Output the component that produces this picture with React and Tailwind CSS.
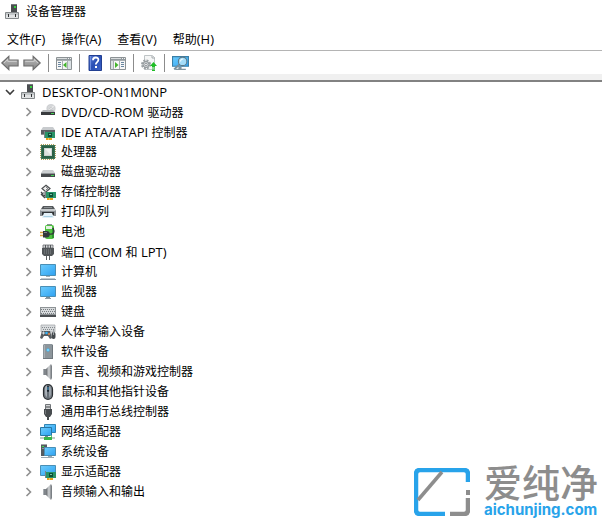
import React, { useState } from 'react';

const Icon = ({ children, className = 'size-4' }) => (
  <svg viewBox="0 0 16 16" className={`${className} shrink-0`} aria-hidden="true">
    {children}
  </svg>
);

// Gradients shared by all icons
const Gradients = () => (
  <svg className="absolute size-0" aria-hidden="true">
    <defs>
      <linearGradient id="screen" x1="0" y1="0" x2="1" y2="1">
        <stop offset="0" stopColor="#6fcbfb" />
        <stop offset="0.5" stopColor="#4db8f8" />
        <stop offset="1" stopColor="#2f9ff0" />
      </linearGradient>
      <linearGradient id="cone" x1="0" y1="0" x2="1" y2="0">
        <stop offset="0" stopColor="#63676b" />
        <stop offset="0.6" stopColor="#d5d8da" />
        <stop offset="1" stopColor="#868a8e" />
      </linearGradient>
      <linearGradient id="help" x1="0" y1="0" x2="1" y2="1">
        <stop offset="0" stopColor="#5b7fd8" />
        <stop offset="0.5" stopColor="#2a4fb4" />
        <stop offset="1" stopColor="#3c62c8" />
      </linearGradient>
      <linearGradient id="arrow" x1="0" y1="0" x2="0" y2="1">
        <stop offset="0" stopColor="#bcbcbc" />
        <stop offset="1" stopColor="#858585" />
      </linearGradient>
    </defs>
  </svg>
);

const Card = ({ x = 5, y = 8 }) => (
  <g transform={`translate(${x} ${y})`}>
    <path d="M0.5 -1v7" stroke="#7d8588" />
    <rect x="1" width="10" height="6" fill="#2a9468" />
    <rect x="4" y="1" width="4" height="4" fill="#0c5038" />
    <path d="M5 2.5h2" stroke="#79c8a5" />
    <path d="M2 6h6v2H2z" fill="#e8a11b" />
    <path d="M4.5 6v2" stroke="#fff0b0" strokeWidth="0.5" />
  </g>
);

const PcIcon = () => (
  <Icon>
    <path d="M7 0h6v9H7z" fill="#4a4d50" />
    <path d="M7 0h6v1H7z" fill="#777b7e" />
    <path d="M10 2h2v2h-2z" fill="#37d23f" />
    <path d="M1.5 8.5h13v6h-13z" fill="#e1e3e4" stroke="#85898b" />
    <path d="M2 9h12v2H2z" fill="#c4c8ca" />
    <path d="M4 10h1v3H4zM11 10h1v3h-1z" fill="#2f3133" />
  </Icon>
);

const DiscDriveIcon = () => (
  <Icon>
    <ellipse cx="11" cy="4.5" rx="4.2" ry="4" fill="#d5d7d9" stroke="#b8bbbe" strokeWidth="0.5" />
    <path d="M11 4.5l3-3M11 4.5L8 7.5" stroke="#f5f5f5" />
    <circle cx="11" cy="4.5" r="1" fill="#fff" stroke="#a4a7aa" strokeWidth="0.5" />
    <path d="M3 6h10l2 2H1z" fill="#aeb2b5" />
    <path d="M1 8h14v3H1z" fill="#383b3e" />
    <path d="M11 9h3v1h-3z" fill="#45cf55" />
  </Icon>
);

const IdeIcon = () => (
  <Icon>
    <path d="M3 3h10l2 3H1z" fill="#c8cbce" />
    <path d="M1 6h14v4H1z" fill="#5a5e61" />
    <path d="M1 10h5v1H1z" fill="#929699" />
    <Card x={4} />
  </Icon>
);

const CpuIcon = () => (
  <Icon>
    <path d="M1 .5h14M1 15.5h14M.5 1v14M15.5 1v14" stroke="#b5a05c" strokeDasharray="1 1" />
    <path d="M1 1h14v14H1z" fill="#3c7457" />
    <path d="M2 2h12v12H2z" fill="#2b6147" />
    <path d="M4 4h8v8H4z" fill="#cfd6d3" />
    <path d="M5 5h6v6H5z" fill="#f0f2f1" />
    <path d="M4 12V4l8 8z" fill="#c1c9c5" opacity="0.4" />
  </Icon>
);

const DiskIcon = () => (
  <Icon>
    <path d="M3 6h10l2 3H1z" fill="#cccfd1" />
    <path d="M1 9h14v4H1z" fill="#46494c" />
    <path d="M1 9h14v1H1z" fill="#929699" />
    <path d="M11 11h3v1h-3z" fill="#43d354" />
  </Icon>
);

const StorageIcon = () => (
  <Icon>
    <path d="M6 1.2L10 4.5 6 8 2 4.5z" fill="#f3f3f3" stroke="#4c4f51" strokeWidth="1.2" />
    <path d="M6 3l2 1.5L6 6" fill="none" stroke="#6c7073" />
    <path d="M1 8l4 4M1 10l4 4" stroke="#414548" strokeWidth="1.3" />
    <path d="M3 8h3v3H3z" fill="#a3a7a9" />
    <Card />
  </Icon>
);

const PrinterIcon = () => (
  <Icon>
    <path d="M3 2h10l2 3H1z" fill="#55595c" />
    <path d="M4 3h8v1H4z" fill="#8c9194" />
    <path d="M1 5h14l1 2v5H0V7z" fill="#8b9094" />
    <path d="M1 5h14v2H1z" fill="#c6cacc" />
    <path d="M2 8h12v3H2z" fill="#313437" />
    <path d="M4 9h8l2 5H2z" fill="#e4f1f8" />
    <path d="M3.5 12.5h9" stroke="#a9cfe2" />
  </Icon>
);

const BatteryIcon = () => (
  <Icon>
    <path d="M7 0h5v2H7z" fill="#8b9094" />
    <rect x="5" y="1" width="9" height="14" rx="2" fill="#4fc23f" />
    <path d="M6 2h6v3H6z" fill="#e4f0e2" />
    <path d="M12 4h2v10h-2z" fill="#2d9430" />
    <path d="M0 8.5h4M0 11.5h4" stroke="#d7a33d" strokeWidth="1.4" />
    <path d="M3 7h3.5a3 3 0 0 1 0 6.5H3z" fill="#33373a" />
    <path d="M9 10c5 1 6-2 4-6" fill="none" stroke="#33373a" strokeWidth="1.3" />
    <path d="M4 8.5h3" stroke="#7f8487" />
  </Icon>
);

const PortIcon = () => (
  <Icon>
    <path d="M3 1h10v3H3z" fill="#d4d6d8" stroke="#676b6e" strokeWidth="0.8" />
    <path d="M5.5 1v3M8 1v3M10.5 1v3" stroke="#55595c" />
    <path d="M2 4h12v6l-2 2H4l-2-2z" fill="#515558" />
    <path d="M4.5 5v5M6.5 5v5M8.5 5v5M10.5 5v5" stroke="#767b7e" strokeWidth="0.7" />
    <path d="M6 12h1v4H6zM9 12h1v4H9z" fill="#5c6063" />
  </Icon>
);

const ComputerIcon = () => (
  <Icon>
    <path d="M.5 .5h15v11H.5z" fill="url(#screen)" stroke="#4a8fb5" />
    <path d="M6 12h4v1H6z" fill="#a3b0b8" />
    <path d="M1 14h14v1H1z" fill="#c0c9cf" />
    <path d="M0 15h16v1H0z" fill="#8794a0" />
  </Icon>
);

const MonitorIcon = () => (
  <Icon>
    <path d="M.5 2.5h15v10H.5z" fill="url(#screen)" stroke="#4a8fb5" />
    <path d="M6 13h4v1H6z" fill="#7e8f98" />
    <path d="M5 14h6v1H5z" fill="#8c9aa2" />
  </Icon>
);

const KeyboardIcon = () => (
  <Icon>
    <path d="M0 3h16v9H0z" fill="#8e9396" />
    <path d="M1 4h14v6H1z" fill="#d7dadc" />
    <path d="M1 5.5h14M2 7.5h13M1 9.5h14" stroke="#777c80" strokeDasharray="1 1" />
    <path d="M0 11h16v2H0z" fill="#4b4f52" />
  </Icon>
);

const HidIcon = () => (
  <Icon>
    <path d="M1 1h14v7H1z" fill="#d8dbdd" stroke="#9da2a5" strokeWidth="0.7" />
    <path d="M2 3.5h13M3 5.5h12" stroke="#868b8f" strokeDasharray="1 1" />
    <path d="M2 7h8l2 7-2 1-2-3H4l-2 3-2-1z" fill="#575c60" />
    <path d="M2 9h3M3.5 7.5v3" stroke="#d5d8da" />
    <circle cx="6.5" cy="9" r="1.3" fill="#38b3f6" />
    <circle cx="9" cy="10" r="1" fill="#e58b4a" />
    <rect x="11.5" y="8" width="4" height="7" rx="2" fill="#44494d" />
    <path d="M13.5 6v5" stroke="#9aa1a6" />
  </Icon>
);

const SoftwareIcon = () => (
  <Icon>
    <path d="M4 0h8l1 1v14H3V1z" fill="#8c959b" />
    <path d="M4 1h1v13H4z" fill="#a9b0b5" />
    <path d="M12 1h1v14h-1zM3 14h10v1H3z" fill="#6f777d" />
    <path d="M8 4l2 2-2 2-2-2z" fill="#36b9fa" />
    <path d="M8 5l1 1-1 1-1-1z" fill="#b0e9ff" />
  </Icon>
);

const SpeakerIcon = () => (
  <Icon>
    <path d="M3 5h3v6H3z" fill="#80858a" />
    <path d="M6 5l5-5v16l-5-5z" fill="url(#cone)" />
    <path d="M11 0l1 2v12l-1 2z" fill="#7b8085" />
    <path d="M3 5h1v6H3z" fill="#a8adb1" />
  </Icon>
);

const MouseIcon = () => (
  <Icon>
    <rect x="3.5" y="0.7" width="9" height="14.6" rx="4.5" fill="#777e85" stroke="#292d31" strokeWidth="1.2" />
    <path d="M5 4.5C5 2 6.5 1.5 7 1.5V13c-2-1-2-4-2-8z" fill="#abb2b9" />
    <path d="M9 2c2 1 2 2 2 5s0 5-2 6z" fill="#98a0a8" />
    <rect x="7" y="2" width="2" height="6" rx="1" fill="#17202a" />
    <path d="M8 3v3" stroke="#5bb6e8" />
    <path d="M8 8v6" stroke="#596068" />
  </Icon>
);

const UsbIcon = () => (
  <Icon>
    <path d="M5.5 .5h5v5h-5z" fill="#d2d4d6" stroke="#717578" />
    <path d="M6.5 2h1v2h-1zM8.5 2h1v2h-1z" fill="#44484b" />
    <path d="M4 5h8v5l-2 3H6l-2-3z" fill="#484c4f" />
    <path d="M5 6h1v4H5z" fill="#777b7e" />
    <path d="M8 12v4" stroke="#484c4f" strokeWidth="2" />
  </Icon>
);

const NetworkIcon = () => (
  <Icon>
    <path d="M4.5 .5h11v8h-11z" fill="url(#screen)" stroke="#3185b4" />
    <path d="M.5 3.5h11v8H.5z" fill="url(#screen)" stroke="#2877a5" />
    <path d="M5 12h3v2H5z" fill="#748892" />
    <path d="M0 14h15" stroke="#c0cdc6" strokeWidth="2" />
    <path d="M4 13h8v3H4z" fill="#38b64a" />
    <path d="M10 11l2 2" stroke="#63ca70" />
  </Icon>
);

const SystemIcon = () => (
  <Icon>
    <path d="M1 0h6v12H1z" fill="#555b5f" />
    <path d="M1 0h6v1H1z" fill="#a2a7aa" />
    <path d="M2 2h2v1H2z" fill="#3fe34c" />
    <path d="M2 4.5h4" stroke="#8d9498" />
    <path d="M4.5 3.5h11v8h-11z" fill="url(#screen)" stroke="#4a8fb5" />
    <path d="M8 12h4v1H8zM1 13h13v1H1z" fill="#9aa8b0" />
  </Icon>
);

const DisplayIcon = () => (
  <Icon>
    <path d="M.5 1.5h15v10H.5z" fill="url(#screen)" stroke="#4a8fb5" />
    <Card />
  </Icon>
);

const BackIcon = () => (
  <Icon className="size-[18px]">
    <path d="M.7 8l6.3-6v3.3h8.2v5.4H7V14z" fill="url(#arrow)" stroke="#6c6c6c" strokeWidth="1" />
    <path d="M2.7 8L6 4.8v1.7h8" fill="none" stroke="#d5d5d5" strokeWidth="0.8" />
  </Icon>
);

const ForwardIcon = () => (
  <Icon className="size-[18px]">
    <path d="M15.3 8L9 2v3.3H.8v5.4H9V14z" fill="url(#arrow)" stroke="#6c6c6c" strokeWidth="1" />
    <path d="M2 6.5h8V4.8L13.2 8" fill="none" stroke="#d5d5d5" strokeWidth="0.8" />
  </Icon>
);

const TreePaneIcon = () => (
  <Icon>
    <path d="M.5 2.5h15v12H.5z" fill="#f7f7f7" stroke="#8c9295" />
    <path d="M1 3h14v2H1z" fill="#929a9e" />
    <path d="M1 3.5h10" stroke="#d9dcdd" />
    <path d="M12 3.5h1M14 3.5h1" stroke="#f4f4f4" />
    <path d="M1 5.5h14M6.5 6v8M11.5 6v8" stroke="#a9afb2" />
    <path d="M2 7.5h3M2 9.5h3M2 11.5h3" stroke="#6986a0" />
    <path d="M12 6h3v8h-3z" fill="#dbe1e4" />
    <path d="M10.5 7v6L7 10z" fill="#42b42b" />
  </Icon>
);

const ActionPaneIcon = () => (
  <Icon>
    <path d="M.5 2.5h15v12H.5z" fill="#f7f7f7" stroke="#8c9295" />
    <path d="M1 3h14v2H1z" fill="#929a9e" />
    <path d="M1 3.5h10" stroke="#d9dcdd" />
    <path d="M12 3.5h1M14 3.5h1" stroke="#f4f4f4" />
    <path d="M1 5.5h14M3.5 6v8M9.5 6v8" stroke="#a9afb2" />
    <path d="M1 6h2v8H1z" fill="#dbe1e4" />
    <path d="M11 7.5h3M11 9.5h3M11 11.5h3" stroke="#6986a0" />
    <path d="M5 7v6l3.5-3z" fill="#42b42b" />
  </Icon>
);

const HelpIcon = () => (
  <Icon>
    <path d="M2 .5h12.5v15H2z" fill="url(#help)" stroke="#223f91" />
    <path d="M3.5 1v14" stroke="#6f8edf" />
    <path d="M6 5.2c0-3.6 5.4-3.5 5.4-.4 0 2.2-2.6 2.3-2.6 4.6" fill="none" stroke="#fff" strokeWidth="1.8" />
    <path d="M8 11h2v2H8z" fill="#fff" />
  </Icon>
);

const UpdateIcon = () => (
  <Icon>
    <path d="M3.5.5h8l2 2v12h-10z" fill="#f5f6f6" stroke="#bfc4c6" />
    <path d="M11 1v2h3" fill="none" stroke="#a4aaad" />
    <circle cx="5" cy="9.5" r="4" fill="none" stroke="#9ba1a4" strokeWidth="2" strokeDasharray="2 1.14" />
    <circle cx="5" cy="9.5" r="3" fill="#d2d6d8" stroke="#8c9295" />
    <circle cx="5" cy="9.5" r="1.2" fill="#fff" stroke="#73797d" strokeWidth="0.7" />
    <path d="M12.5 7l3.5 4h-2v1h-3v-1H9z" fill="#1fbe26" />
    <path d="M11 12.5h3v1h-3zM11 14.5h3v1.5h-3z" fill="#1fbe26" />
  </Icon>
);

const ScanIcon = () => (
  <Icon className="size-[17px]">
    <path d="M.5 1.5h15v9H.5z" fill="url(#screen)" stroke="#397fa7" />
    <path d="M6 11h3v2H6zM3 13h10v1H3z" fill="#8195a0" />
    <path d="M7.5 8.5L2 13.5" stroke="#78909e" strokeWidth="1.8" />
    <circle cx="10" cy="6" r="4" fill="#a3dcf8" stroke="#5c7886" />
    <path d="M8 6c0-1.5 1-2.3 2.5-2.3" stroke="#effaff" fill="none" />
  </Icon>
);

const menus = ['文件(F)', '操作(A)', '查看(V)', '帮助(H)'];

const devices = [
  { name: 'DVD/CD-ROM 驱动器', icon: DiscDriveIcon },
  { name: 'IDE ATA/ATAPI 控制器', icon: IdeIcon },
  { name: '处理器', icon: CpuIcon },
  { name: '磁盘驱动器', icon: DiskIcon },
  { name: '存储控制器', icon: StorageIcon },
  { name: '打印队列', icon: PrinterIcon },
  { name: '电池', icon: BatteryIcon },
  { name: '端口 (COM 和 LPT)', icon: PortIcon },
  { name: '计算机', icon: ComputerIcon },
  { name: '监视器', icon: MonitorIcon },
  { name: '键盘', icon: KeyboardIcon },
  { name: '人体学输入设备', icon: HidIcon },
  { name: '软件设备', icon: SoftwareIcon },
  { name: '声音、视频和游戏控制器', icon: SpeakerIcon },
  { name: '鼠标和其他指针设备', icon: MouseIcon },
  { name: '通用串行总线控制器', icon: UsbIcon },
  { name: '网络适配器', icon: NetworkIcon },
  { name: '系统设备', icon: SystemIcon },
  { name: '显示适配器', icon: DisplayIcon },
  { name: '音频输入和输出', icon: SpeakerIcon },
];

// Latin runs are set one size larger than the Chinese around them
const Label = ({ text }) => (
  <span className="whitespace-pre">
    {text.split(/([ -~]+)/).filter(Boolean).map((part, i) => (
      /^[ -~]/.test(part) ? <span key={i} className="text-[13px] leading-4">{part}</span> : part
    ))}
  </span>
);

const ToolButton = ({ label, children }) => (
  <button type="button" aria-label={label} className="flex shrink-0 items-center hover:bg-sky-100">
    {children}
  </button>
);

const Separator = () => <div className="h-[18px] w-px shrink-0 bg-[#8c8c8c]" />;

const DeviceRow = ({ device }) => {
  const DeviceIcon = device.icon;

  return (
    <li>
      <button type="button" className="flex h-5 items-center pl-6 whitespace-nowrap hover:bg-sky-50">
        <svg viewBox="0 0 10 10" className="mr-1.5 size-2.5 shrink-0" aria-hidden="true">
          <path d="M2.5 1L6.5 5 2.5 9" fill="none" stroke="#8f8f8f" strokeWidth="1.6" />
        </svg>
        <DeviceIcon />
        <span className="ml-[5px]"><Label text={device.name} /></span>
      </button>
    </li>
  );
};

const Watermark = () => (
  <div className="pointer-events-none absolute right-1 bottom-0.5 flex items-center gap-[14px]">
    <svg viewBox="0 0 56 48" className="h-12 w-14" aria-hidden="true">
      <path d="M54 14V6q0-4-4-4H6Q2 2 2 6v36q0 4 4 4h25" fill="none" stroke="#28a3ea" strokeWidth="4.5" />
      <path d="M28 4L4 32" stroke="#8d8d8d" strokeWidth="3.5" />
      <path d="M54 30v12q0 4-4 4H36" fill="none" stroke="#8d8d8d" strokeWidth="4.5" />
      <path d="M54 22v5" stroke="#8d8d8d" strokeWidth="4" />
    </svg>
    <div className="flex flex-col">
      <span className="font-['Liberation_Sans','Noto_Sans_CJK_SC',sans-serif] text-[38px] leading-9 font-medium text-[#8d8d8d]">爱纯净</span>
      <span className="font-['Inter','Noto_Sans_CJK_SC',sans-serif] text-[15px] leading-4 font-bold text-[#28a3ea]">aichunjing.com</span>
    </div>
  </div>
);

const App = () => {
  const [open, setOpen] = useState(true);

  return (
    <div className="relative min-h-screen overflow-hidden bg-white font-['Open_Sans','Noto_Sans_CJK_SC',sans-serif] text-xs text-black">
      <Gradients />

      <header className="flex h-6 items-center gap-1.5 pl-1">
        <PcIcon />
        <h1>设备管理器</h1>
      </header>

      <nav className="flex h-[26px] items-center gap-4 pt-1 pl-[7px]">
        {menus.map(menu => (
          <button key={menu} type="button" className="hover:bg-sky-100"><Label text={menu} /></button>
        ))}
      </nav>

      <div role="toolbar" aria-label="工具栏" className="flex h-6 items-center gap-[7px] border-t border-[#b4b4b4] pt-px pl-px">
        <div className="flex gap-1">
          <ToolButton label="后退"><BackIcon /></ToolButton>
          <ToolButton label="前进"><ForwardIcon /></ToolButton>
        </div>
        <Separator />
        <ToolButton label="显示控制台树"><TreePaneIcon /></ToolButton>
        <Separator />
        <ToolButton label="帮助"><HelpIcon /></ToolButton>
        <ToolButton label="操作窗格"><ActionPaneIcon /></ToolButton>
        <Separator />
        <ToolButton label="更新驱动程序"><UpdateIcon /></ToolButton>
        <Separator />
        <ToolButton label="扫描检测硬件改动"><ScanIcon /></ToolButton>
      </div>
      <div className="h-2 border-b-2 border-[#828282] bg-[#f0f0f0]" />

      <main>
        <button
          type="button"
          aria-expanded={open}
          onClick={() => setOpen(!open)}
          className="flex h-5 items-center pl-1"
        >
          <svg viewBox="0 0 12 12" className="mr-1 size-3 shrink-0" aria-hidden="true">
            <path d={open ? 'M2 4l4 4 4-4' : 'M4 2l4 4-4 4'} fill="none" stroke="#3c3c3c" strokeWidth="1.6" />
          </svg>
          <PcIcon />
          <span className="ml-1.5"><Label text="DESKTOP-ON1M0NP" /></span>
        </button>
        {open && (
          <ul>
            {devices.map(device => (
              <DeviceRow key={device.name} device={device} />
            ))}
          </ul>
        )}
      </main>

      <Watermark />
    </div>
  );
};

export default App;
